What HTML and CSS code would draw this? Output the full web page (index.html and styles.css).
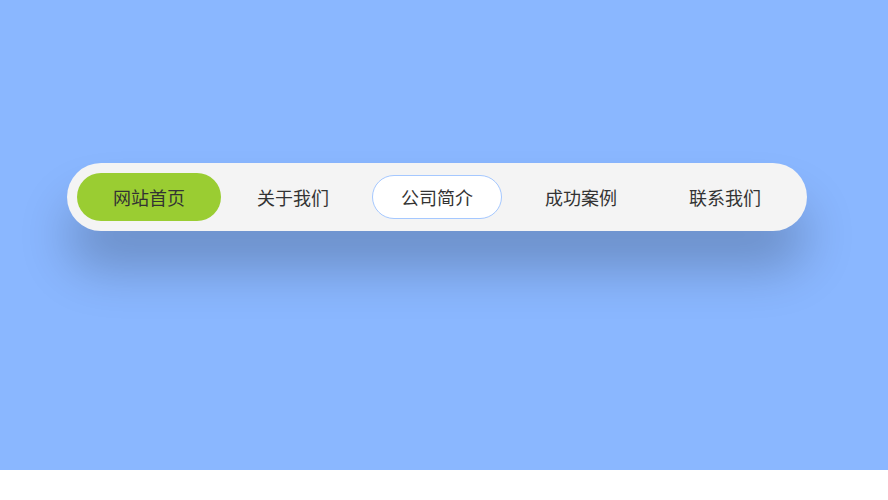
FILE: index.html
```html
<!DOCTYPE html>
<html lang="zh">
<head>
<meta charset="utf-8">
<title>导航</title>
<link rel="stylesheet" href="styles.css">
</head>
<body>
<div class="stage">
  <nav class="nav">
    <a class="item active">网站首页</a>
    <a class="item">关于我们</a>
    <a class="item hover">公司简介</a>
    <a class="item">成功案例</a>
    <a class="item">联系我们</a>
  </nav>
</div>
</body>
</html>
```
FILE: styles.css
```css
html, body {
  margin: 0;
  padding: 0;
  background: #ffffff;
}
.stage {
  height: 470px;
  background: #8ab7ff;
  padding: 163px 0 0 67px;
  box-sizing: border-box;
}
.nav {
  display: flex;
  width: 740px;
  height: 68px;
  box-sizing: border-box;
  padding: 10px;
  background: #f4f4f4;
  border-radius: 34px;
  box-shadow: 0 38px 50px rgba(0, 0, 0, 0.22);
  font-family: "Noto Sans CJK SC", "Microsoft YaHei", sans-serif;
}
.item {
  width: 144px;
  height: 48px;
  display: flex;
  align-items: center;
  justify-content: center;
  font-size: 18px;
  color: #333333;
  border-radius: 24px;
  box-sizing: border-box;
  text-decoration: none;
}
.item.active {
  background: #9acd32;
}
.item.hover {
  width: 130px;
  height: 44px;
  margin: 2px 7px;
  background: #ffffff;
  border: 1px solid #a5c8ff;
  border-radius: 22px;
}
```
